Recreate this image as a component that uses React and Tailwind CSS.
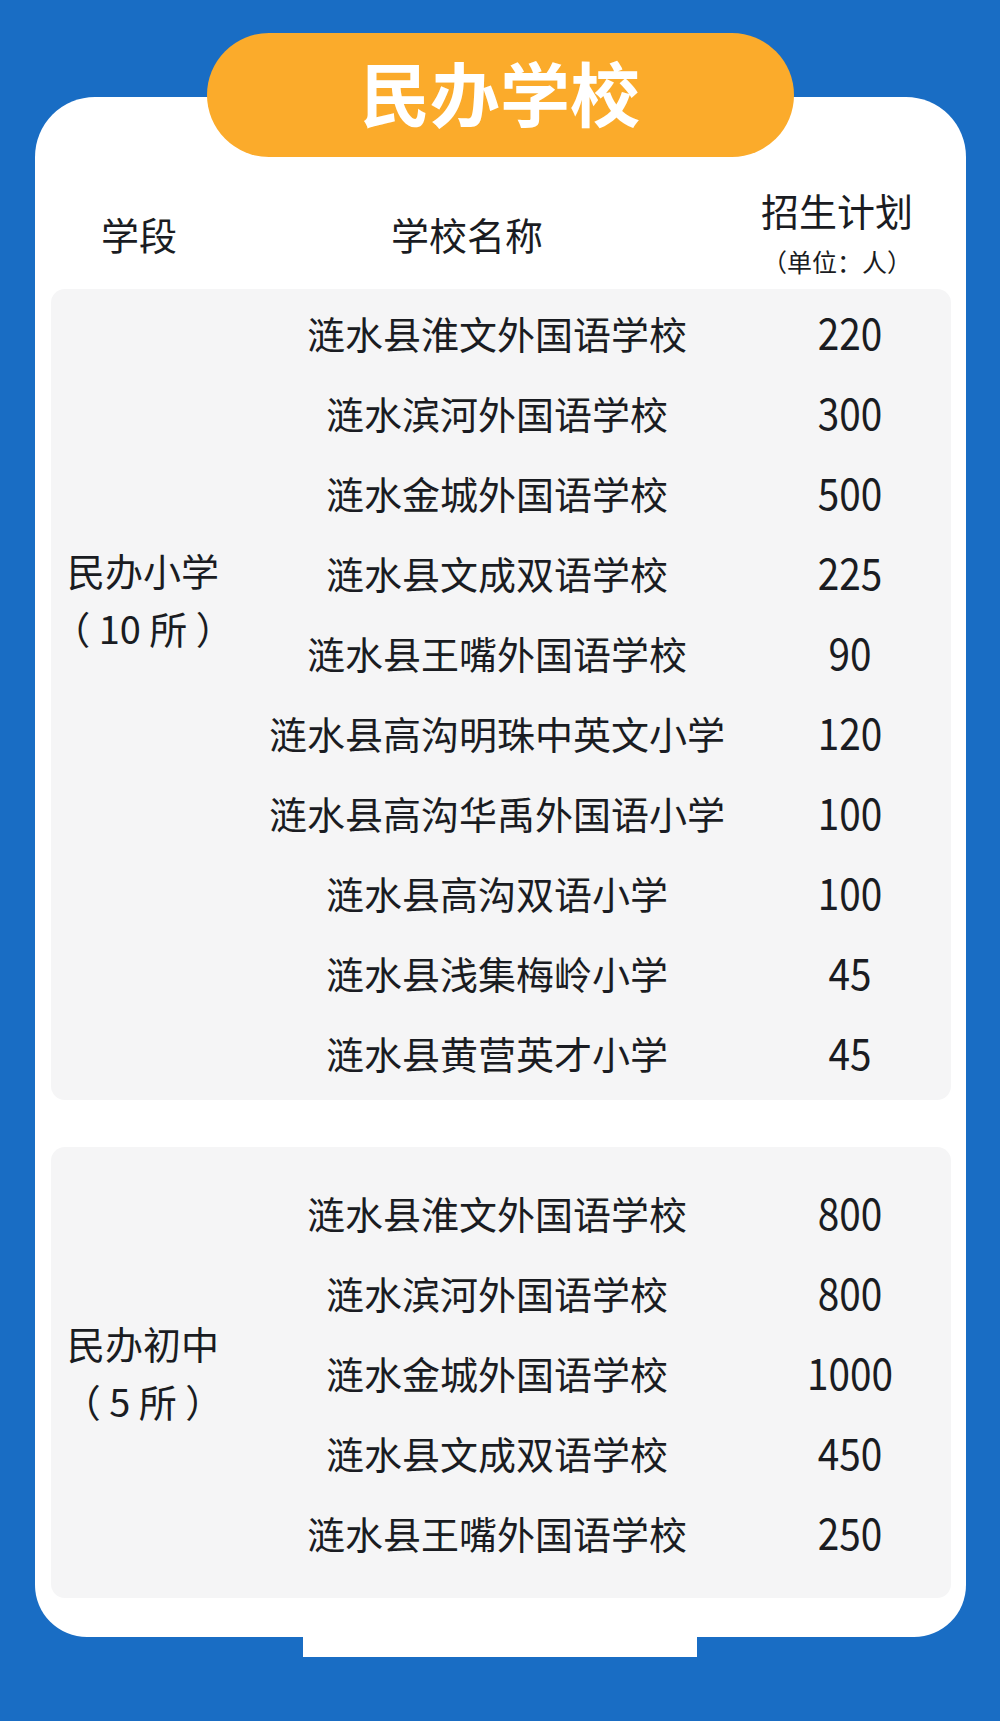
const primary = [
  ["涟水县淮文外国语学校", "220"],
  ["涟水滨河外国语学校", "300"],
  ["涟水金城外国语学校", "500"],
  ["涟水县文成双语学校", "225"],
  ["涟水县王嘴外国语学校", "90"],
  ["涟水县高沟明珠中英文小学", "120"],
  ["涟水县高沟华禹外国语小学", "100"],
  ["涟水县高沟双语小学", "100"],
  ["涟水县浅集梅岭小学", "45"],
  ["涟水县黄营英才小学", "45"],
];

const junior = [
  ["涟水县淮文外国语学校", "800"],
  ["涟水滨河外国语学校", "800"],
  ["涟水金城外国语学校", "1000"],
  ["涟水县文成双语学校", "450"],
  ["涟水县王嘴外国语学校", "250"],
];

const Rows = ({ items }) => (
  <div className="flex flex-col">
    {items.map(([name, num], i) => (
      <div key={i} className="h-20 grid grid-cols-[524px_182px] items-center">
        <span className="text-center whitespace-nowrap">{name}</span>
        <span className="text-center text-[43px] leading-none scale-x-[0.9] -mt-[2px]">
          {num}
        </span>
      </div>
    ))}
  </div>
);

const Panel = ({ title, count, items, className, labelClass }) => (
  <div className={`rounded-[14px] bg-[#f5f5f6] flex ${className}`}>
    <div className={`w-[184px] flex flex-col items-center leading-[58px] ${labelClass}`}>
      <span>{title}</span>
      <span className="whitespace-pre">（ {count} 所 ）</span>
    </div>
    <Rows items={items} />
  </div>
);

const App = () => {
  return (
    <div
      className="w-[1000px] h-[1721px] bg-[#196dc4] pt-[33px] text-[#1a1c22]"
      style={{ fontFamily: '"Noto Sans CJK SC", "Noto Sans", sans-serif' }}
    >
      <div className="relative z-10 mx-auto w-[587px] h-[124px] rounded-full bg-[#fbab2b] flex items-center justify-center">
        <span className="text-white font-bold text-[70px] leading-none -mt-[6px]">
          民办学校
        </span>
      </div>

      <div className="-mt-[60px] mx-[35px] w-[931px] rounded-t-[60px] rounded-b-[52px] bg-white pl-4 pr-[15px] pb-[39px]">
        <div className="h-[192px] grid grid-cols-[176px_480px_1fr] text-[38px]">
          <span className="text-center leading-[48px] mt-[113px]">学段</span>
          <span className="text-center leading-[48px] mt-[113px]">学校名称</span>
          <div className="pl-4 flex flex-col items-center mt-[89px]">
            <span className="leading-[48px]">招生计划</span>
            <span className="text-[25px] leading-[32px] mt-[11px]">（单位：人）</span>
          </div>
        </div>

        <div className="text-[38px]">
          <Panel
            title="民办小学"
            count="10"
            items={primary}
            className="pt-[3px] pb-[8px]"
            labelClass="pt-[249px]"
          />
          <Panel
            title="民办初中"
            count="5"
            items={junior}
            className="mt-[47px] pt-[25px] pb-[26px]"
            labelClass="justify-center"
          />
        </div>
      </div>

      <div className="mx-auto w-[394px] h-[20px] bg-white" />
    </div>
  );
};

export default App;
